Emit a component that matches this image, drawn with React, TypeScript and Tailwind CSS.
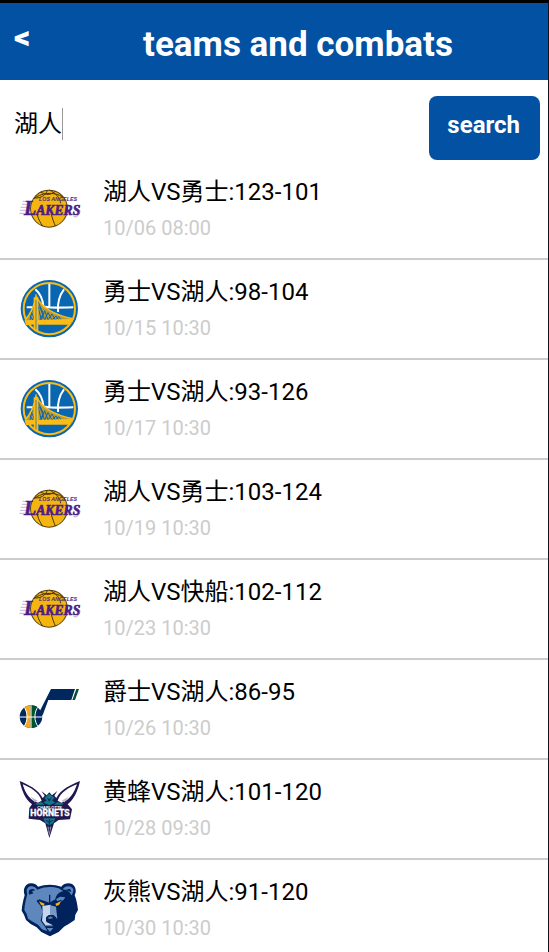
import { useState } from "react";

type Team = "lakers" | "warriors" | "jazz" | "hornets" | "grizzlies";

interface Game {
  team: Team;
  title: string;
  time: string;
}

const games: Game[] = [
  { team: "lakers", title: "湖人VS勇士:123-101", time: "10/06 08:00" },
  { team: "warriors", title: "勇士VS湖人:98-104", time: "10/15 10:30" },
  { team: "warriors", title: "勇士VS湖人:93-126", time: "10/17 10:30" },
  { team: "lakers", title: "湖人VS勇士:103-124", time: "10/19 10:30" },
  { team: "lakers", title: "湖人VS快船:102-112", time: "10/23 10:30" },
  { team: "jazz", title: "爵士VS湖人:86-95", time: "10/26 10:30" },
  { team: "hornets", title: "黄蜂VS湖人:101-120", time: "10/28 09:30" },
  { team: "grizzlies", title: "灰熊VS湖人:91-120", time: "10/30 10:30" },
];

function Lakers() {
  return (
    <>
      <circle cx="117" cy="116" r="57" fill="#5a4312" />
      <circle cx="117" cy="116" r="54" fill="#f5b50f" />
      <g fill="none" stroke="#4a3510" strokeWidth="3">
        <path d="M72 86C90 70 130 62 160 82M92 66C110 76 120 76 136 64M112 60C108 78 90 84 76 84M118 60C138 70 150 84 152 100" />
        <path d="M82 134C86 150 92 160 98 168M124 134C128 148 132 158 136 168" />
      </g>
      <g stroke="#a58bc2" strokeWidth="2">
        <path d="M38 94H56M36 103H54M32 112H52M30 121H48M28 130H46" />
      </g>
      <text
        x="42"
        y="134"
        fontFamily="'Liberation Serif', serif"
        fontWeight="700"
        fontStyle="italic"
        fill="#4d1c87"
        stroke="#4d1c87"
        strokeWidth="2"
        fontSize="41"
      >
        <tspan fontSize="60">L</tspan>AKERS
      </text>
      <text
        x="87"
        y="94"
        fontFamily="'Liberation Sans', sans-serif"
        fontWeight="700"
        fontStyle="italic"
        fontSize="16"
        fill="#4d1c87"
      >
        LOS ANGELES
      </text>
      <path d="M190 138C200 146 208 134 210 122" fill="none" stroke="#8b6bb0" strokeWidth="2" />
    </>
  );
}

function Warriors() {
  return (
    <>
      <circle cx="118" cy="116" r="86" fill="#0967b1" />
      <circle cx="118" cy="116" r="77" fill="none" stroke="#fdbb16" strokeWidth="6" />
      <g fill="none" stroke="#fff" strokeWidth="6">
        <path d="M118 42V114M50 112H68M90 106C102 114 130 114 190 112" />
        <path d="M76 58C90 70 98 88 100 108M162 58C148 76 142 98 144 126" />
      </g>
      <path d="M44 152C58 136 70 110 78 82C90 112 132 136 190 146L186 158H46Z" fill="#b99b35" />
      <path
        d="M50 146L62 122L74 148L82 100L94 150L104 122L114 150L126 132L136 150L146 140L154 150M56 130L68 150L80 120L90 112L104 150L114 128L126 150L138 138L146 150M70 108L60 150M84 96L100 130L90 150"
        fill="none"
        stroke="#0967b1"
        strokeWidth="3"
      />
      <path d="M44 151L190 147L188 155L84 162L48 166Z" fill="#fdbb16" />
      <path d="M71 82H85V184L71 178Z" fill="#fdbb16" />
      <path d="M78 73V184" stroke="#fdbb16" strokeWidth="4" />
      <path d="M78 78C94 112 134 136 192 147M78 82C72 108 62 132 46 149" fill="none" stroke="#fdbb16" strokeWidth="5" />
      <path d="M86 152L188 148L178 164L86 164Z" fill="#fdbb16" />
      <path d="M78 90V178" stroke="#0967b1" strokeWidth="2" />
    </>
  );
}

function Jazz() {
  return (
    <>
      <defs>
        <clipPath id="jazz-ball">
          <circle cx="63" cy="140" r="34" />
        </clipPath>
      </defs>
      <path d="M123 57H195L184 90H115L98 136L88 126Z" fill="#00285e" />
      <path d="M199 57H207L195 90H187Z" fill="#00532f" />
      <g clipPath="url(#jazz-ball)">
        <path d="M28 104H98V176H28Z" fill="#00285e" />
        <path d="M38 104H62V176H38C54 156 54 124 38 104Z" fill="#faa61a" />
        <path d="M62 104H88C72 124 72 156 88 176H62Z" fill="#00532f" />
        <path
          d="M28 141H98M63 104V176M40 108C55 126 55 154 40 172M86 108C71 126 71 154 86 172"
          stroke="#fff"
          strokeWidth="3"
          fill="none"
        />
      </g>
    </>
  );
}

function Hornets() {
  return (
    <>
      <path
        d="M29 33C58 46 84 58 98 84L104 77L94 63L110 76L118 67L126 76L142 63L133 77L139 84C152 58 180 46 210 33C204 62 192 88 173 103L186 118L180 148L146 150L132 160L118 204L106 160L90 150L56 146L58 114L66 103C46 88 36 64 29 33Z"
        fill="#211750"
      />
      <path
        d="M38 43C62 53 86 66 95 92L84 98C60 92 46 70 38 43ZM201 43C176 53 152 66 143 92L154 98C178 92 192 70 201 43Z"
        fill="#fff"
      />
      <path d="M62 80L84 93L74 97ZM176 80L154 93L164 97Z" fill="#b7b6ca" />
      <path d="M103 84L118 71L134 84L126 91L136 98L118 106L100 98L110 91Z" fill="#0b7987" />
      <path d="M110 82L118 95L126 82L118 88Z" fill="#211750" />
      <path d="M74 101L94 96L104 104H80ZM162 101L142 96L132 104H156Z" fill="#0b7987" />
      <text
        x="82"
        y="116"
        fontFamily="'Liberation Sans', sans-serif"
        fontWeight="700"
        fontSize="12"
        fill="#fff"
      >
        CHARLOTTE
      </text>
      <text
        x="61"
        y="139"
        fontFamily="Roboto, sans-serif"
        fontWeight="700"
        fontSize="26"
        fill="#fff"
        stroke="#fff"
        strokeWidth="1"
      >
        HORNETS
      </text>
      <path d="M100 145H136L130 159L118 166L106 159Z" fill="#0b7987" />
      <path d="M108 151L118 157L128 151M118 147V164" stroke="#211750" strokeWidth="3" fill="none" />
      <path d="M112 170H124L118 198Z" fill="#8d8bae" />
      <path d="M118 166V184" stroke="#211750" strokeWidth="3" />
    </>
  );
}

function Grizzlies() {
  return (
    <>
      <path
        d="M44 76C36 54 50 38 64 40C74 40 80 44 84 50C106 42 132 42 154 50C162 38 178 38 186 42C198 50 200 64 194 76C200 90 202 106 204 120L196 134L194 150L176 162L162 170L146 186L120 199L94 186L80 172L62 162L48 150L42 134L35 122C36 106 40 90 44 76Z"
        fill="#00235d"
      />
      <path
        d="M52 72C46 56 56 48 66 49C74 50 78 54 82 59C106 49 128 50 146 55L160 64C146 66 138 76 136 88L118 98L88 88L80 94L92 108L98 126L92 152L106 172L112 184L96 178L84 164L66 154L54 146L50 132L43 120C44 104 48 88 52 72Z"
        fill="#5d87bd"
      />
      <path d="M56 66C56 56 70 54 76 61L66 63L70 70L58 74Z" fill="#00235d" />
      <path d="M158 58C166 46 184 46 190 58C190 66 188 72 184 76C178 62 168 60 158 58Z" fill="#5d87bd" />
      <path d="M166 60L180 56L184 66Z" fill="#00235d" />
      <path d="M138 88L150 80L166 82L160 90L146 98Z" fill="#5d87bd" />
      <path d="M97 108L112 106L122 104L122 136L110 142L110 156L126 164L130 169H108L96 152L98 132Z" fill="#c5d6ea" />
      <path d="M122 106L138 110L142 146L132 138L122 134Z" fill="#7699c7" />
      <path d="M108 142L116 135L130 135L138 142L132 156L118 160L108 154Z" fill="#00235d" />
      <path d="M112 144L122 139L130 144L120 147Z" fill="#6b7c98" />
      <path d="M82 91L114 102M154 91L126 102M119 74V99" stroke="#00235d" strokeWidth="4" />
      <path d="M87 94L104 101L101 108L93 105ZM153 94L136 101L139 108L147 105Z" fill="#f5b112" />
      <path d="M108 168H132" stroke="#00235d" strokeWidth="3" fill="none" />
      <path d="M110 174H130L120 186Z" fill="#5d87bd" />
    </>
  );
}

const logos = {
  lakers: Lakers,
  warriors: Warriors,
  jazz: Jazz,
  hornets: Hornets,
  grizzlies: Grizzlies,
};

function GameRow({ game }: { game: Game }) {
  const Logo = logos[game.team];
  return (
    <li className="flex gap-[23px] border-b-2 border-[#cccccc] px-5 pt-5 pb-[18px]">
      <svg viewBox="30 30 180 180" className="size-15 shrink-0 overflow-visible" role="img" aria-label={game.team}>
        <Logo />
      </svg>
      <div className="min-w-0">
        <p className="text-2xl/6 text-black">{game.title}</p>
        <p className="mt-3 text-xl/6 text-[#cccccc]">{game.time}</p>
      </div>
    </li>
  );
}

export default function App() {
  const [query, setQuery] = useState("湖人");
  return (
    <div className="h-screen overflow-hidden border-t-3 border-r border-t-black border-r-[#0b1520] bg-white font-[Roboto,'Noto_Sans_CJK_SC',sans-serif]">
      <header className="grid grid-cols-[48px_1fr] items-start bg-[#0251a2] pt-[22px] pb-[15px] text-white">
        <button type="button" aria-label="Back" className="pl-3.5 text-left text-[32px]/6 font-black">
          &lt;
        </button>
        <h1 className="text-center text-[35px]/10 font-bold">teams and combats</h1>
      </header>
      <form className="flex items-start justify-between pt-4 pr-2 pl-3.5" onSubmit={(e) => e.preventDefault()}>
        <div className="flex h-14 items-center">
          <input
            type="text"
            aria-label="Team name"
            value={query}
            onChange={(e) => setQuery(e.target.value)}
            className="field-sizing-content bg-transparent text-2xl/8 text-black outline-none"
          />
          <span className="h-8 w-px bg-[#999999]" />
        </div>
        <button type="submit" className="h-16 rounded-lg bg-[#0251a2] pr-5 pb-1.5 pl-[18px] text-2xl/8 font-bold text-white">
          search
        </button>
      </form>
      <ul>
        {games.map((game) => (
          <GameRow key={game.time} game={game} />
        ))}
      </ul>
    </div>
  );
}
